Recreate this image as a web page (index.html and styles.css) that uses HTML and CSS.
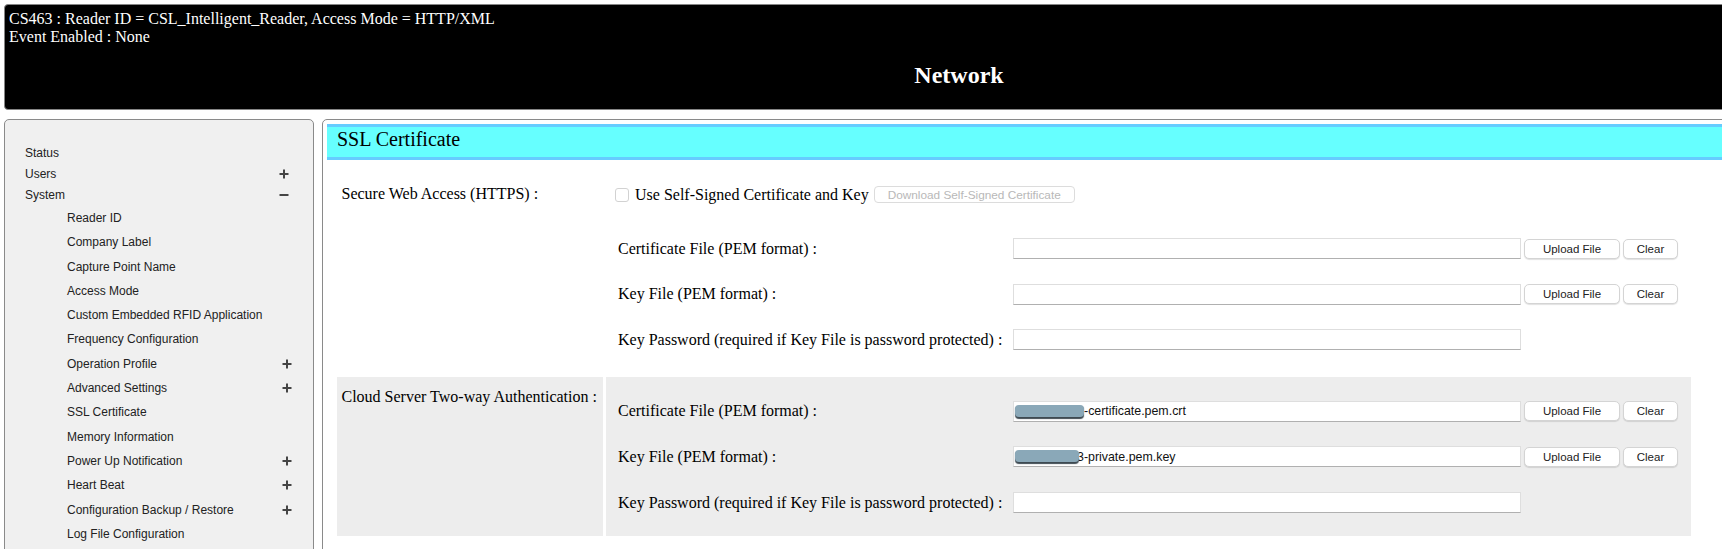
FILE: index.html
```html
<!DOCTYPE html>
<html lang="en">
<head>
<meta charset="utf-8">
<title>Network - SSL Certificate</title>
<link rel="stylesheet" href="styles.css">
</head>
<body>
<div class="page">
  <header class="topbar">
    <div class="info">CS463 : Reader ID = CSL_Intelligent_Reader, Access Mode = HTTP/XML</div>
    <div class="info">Event Enabled : None</div>
    <h1 class="title">Network</h1>
  </header>

  <div class="layout">
    <nav class="sidebar">
      <ul class="menu">
        <li class="item top"><span>Status</span></li>
        <li class="item top"><span>Users</span><svg class="ico" viewBox="0 0 10 10"><path d="M5 0.5V9.5M0.5 5H9.5"/></svg></li>
        <li class="item top"><span>System</span><svg class="ico" viewBox="0 0 10 10"><path d="M0.5 5H9.5"/></svg></li>
        <li class="item sub"><span>Reader ID</span></li>
        <li class="item sub"><span>Company Label</span></li>
        <li class="item sub"><span>Capture Point Name</span></li>
        <li class="item sub"><span>Access Mode</span></li>
        <li class="item sub"><span>Custom Embedded RFID Application</span></li>
        <li class="item sub"><span>Frequency Configuration</span></li>
        <li class="item sub"><span>Operation Profile</span><svg class="ico" viewBox="0 0 10 10"><path d="M5 0.5V9.5M0.5 5H9.5"/></svg></li>
        <li class="item sub"><span>Advanced Settings</span><svg class="ico" viewBox="0 0 10 10"><path d="M5 0.5V9.5M0.5 5H9.5"/></svg></li>
        <li class="item sub"><span>SSL Certificate</span></li>
        <li class="item sub"><span>Memory Information</span></li>
        <li class="item sub"><span>Power Up Notification</span><svg class="ico" viewBox="0 0 10 10"><path d="M5 0.5V9.5M0.5 5H9.5"/></svg></li>
        <li class="item sub"><span>Heart Beat</span><svg class="ico" viewBox="0 0 10 10"><path d="M5 0.5V9.5M0.5 5H9.5"/></svg></li>
        <li class="item sub"><span>Configuration Backup / Restore</span><svg class="ico" viewBox="0 0 10 10"><path d="M5 0.5V9.5M0.5 5H9.5"/></svg></li>
        <li class="item sub"><span>Log File Configuration</span></li>
      </ul>
    </nav>

    <main class="content">
      <div class="bar">SSL Certificate</div>
      <div class="cfg">
        <section class="sec sec-plain">
          <div class="lcell">Secure Web Access (HTTPS) :</div>
          <div class="rcell">
            <div class="chkline">
              <span class="chk"></span>
              <span class="chklabel">Use Self-Signed Certificate and Key</span>
              <button class="dl" disabled>Download Self-Signed Certificate</button>
            </div>
            <div class="frow">
              <span class="flabel">Certificate File (PEM format) :</span>
              <span class="field"><input class="inp" type="text"></span>
              <button class="btn">Upload File</button>
              <button class="btn">Clear</button>
            </div>
            <div class="frow">
              <span class="flabel">Key File (PEM format) :</span>
              <span class="field"><input class="inp" type="text"></span>
              <button class="btn">Upload File</button>
              <button class="btn">Clear</button>
            </div>
            <div class="frow">
              <span class="flabel">Key Password (required if Key File is password protected) :</span>
              <span class="field"><input class="inp" type="password"></span>
            </div>
          </div>
        </section>

        <section class="sec sec-gray">
          <div class="lcell">Cloud Server Two-way Authentication :</div>
          <div class="rcell">
            <div class="frow">
              <span class="flabel">Certificate File (PEM format) :</span>
              <span class="field"><input class="inp inp-cert" type="text" value="-certificate.pem.crt"><span class="redact redact-a"></span></span>
              <button class="btn">Upload File</button>
              <button class="btn">Clear</button>
            </div>
            <div class="frow">
              <span class="flabel">Key File (PEM format) :</span>
              <span class="field"><input class="inp inp-key" type="text" value="3-private.pem.key"><span class="redact redact-b"></span></span>
              <button class="btn">Upload File</button>
              <button class="btn">Clear</button>
            </div>
            <div class="frow">
              <span class="flabel">Key Password (required if Key File is password protected) :</span>
              <span class="field"><input class="inp" type="password"></span>
            </div>
          </div>
        </section>
      </div>
    </main>
  </div>
</div>
</body>
</html>
```

FILE: styles.css
```css
html, body {
  margin: 0;
  padding: 0;
  overflow: hidden;
  background: #ffffff;
}

.page {
  width: 1910px;
  padding: 4px;
  font-family: "Liberation Serif", "Times New Roman", serif;
  color: #000;
}

/* ---------- header ---------- */
.topbar {
  background: #000;
  color: #fff;
  border: 1px solid #858585;
  border-radius: 4px;
  padding: 5px 4px 3px;
}

.info {
  font-size: 16px;
  line-height: 18.4px;
}

.title {
  margin: 14px 0 17px;
  font-size: 24px;
  line-height: 28px;
  font-weight: bold;
  text-align: center;
}

/* ---------- layout ---------- */
.layout {
  display: flex;
  gap: 8px;
  margin-top: 9px;
}

.sidebar {
  box-sizing: border-box;
  width: 310px;
  height: 480px;
  flex: none;
  background: #f0f0f0;
  border: 1px solid #8a8a8a;
  border-radius: 5px;
  padding-top: 23px;
  font-family: "Liberation Sans", Arial, sans-serif;
  font-size: 12px;
  color: #222;
}

.menu {
  list-style: none;
  margin: 0;
  padding: 0;
}

.item {
  display: flex;
  align-items: center;
  justify-content: space-between;
}

.item.top {
  height: 21px;
  padding: 0 24px 0 20px;
}

.item.sub {
  height: 24.3px;
  padding: 0 21px 0 62px;
}

.ico {
  width: 10px;
  height: 10px;
  fill: none;
  stroke: #444;
  stroke-width: 2;
}

/* ---------- main ---------- */
.content {
  flex: 1;
  height: 480px;
  box-sizing: border-box;
  border: 1px solid #8a8a8a;
  border-radius: 5px;
  padding: 4px;
  background: #fff;
}

.bar {
  background: #66ffff;
  border-top: 3px solid #66ccff;
  border-bottom: 3px solid #66ccff;
  padding: 1px 10px 6px;
  font-size: 20px;
  line-height: 23px;
}

.cfg {
  width: 1354px;
  margin: 17px 0 0 10px;
}

.sec {
  display: grid;
  grid-template-columns: 266px 1085px;
  column-gap: 3px;
  font-size: 16px;
  line-height: 18px;
}

.sec-plain {
  padding-bottom: 14px;
}

.sec-plain .lcell {
  padding: 8px 0 0 4.5px;
}

.sec-plain .rcell {
  padding-top: 7px;
}

.sec-gray .lcell,
.sec-gray .rcell {
  background: #ededed;
}

.sec-gray .lcell {
  padding: 11px 0 0 4.5px;
}

.sec-gray .rcell {
  padding: 12px 0 11px;
}

.chkline {
  display: flex;
  align-items: center;
  height: 22px;
  padding-left: 9px;
  margin-bottom: 20px;
}

.chk {
  box-sizing: border-box;
  width: 14px;
  height: 14px;
  border: 1px solid #d2d2d2;
  border-radius: 3px;
  background: #fff;
}

.chklabel {
  margin-left: 6px;
}

.dl {
  box-sizing: border-box;
  margin-left: 5px;
  width: 201px;
  height: 17px;
  padding: 0;
  border: 1px solid #dcdcdc;
  border-radius: 4px;
  background: #fff;
  color: #b8b8b8;
  font-family: "Liberation Sans", Arial, sans-serif;
  font-size: 11.8px;
}

.frow {
  display: grid;
  grid-template-columns: 392px 508px 96px 55px;
  column-gap: 3px;
  align-items: center;
  height: 45.6px;
  padding-left: 12px;
}

.field {
  position: relative;
  display: block;
  height: 21px;
}

.inp {
  box-sizing: border-box;
  display: block;
  width: 508px;
  height: 21px;
  margin: 0;
  padding: 0 4px;
  border: 1px solid #dedede;
  border-bottom-color: #b0b0b0;
  background: #fff;
  font-family: "Liberation Sans", Arial, sans-serif;
  font-size: 12.4px;
  color: #111;
  outline: none;
}

.inp-cert {
  padding-left: 70px;
}

.inp-key {
  padding-left: 63px;
}

.redact {
  position: absolute;
  top: 4px;
  height: 12px;
  border-radius: 4px;
  background: #8aa8b8;
  box-shadow: 0 1.5px 1px #3e4a52;
}

.redact-a {
  left: 2px;
  width: 69px;
}

.redact-b {
  left: 2px;
  width: 64px;
}

.btn {
  box-sizing: border-box;
  height: 20px;
  margin: 0;
  padding: 0;
  border: 1px solid #d4d4d4;
  border-radius: 5px;
  background: #fff;
  box-shadow: 0 1px 1px rgba(0, 0, 0, 0.12);
  font-family: "Liberation Sans", Arial, sans-serif;
  font-size: 11.5px;
  color: #222;
}
```
